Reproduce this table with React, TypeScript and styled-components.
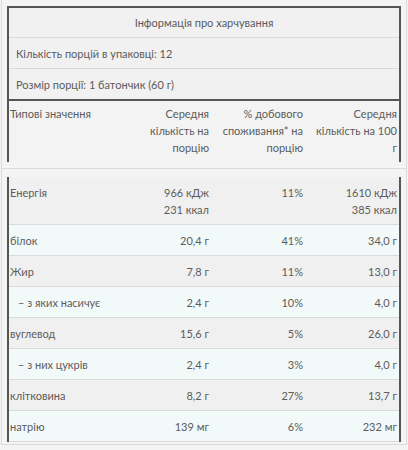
import styled, { createGlobalStyle } from 'styled-components';

const GlobalStyle = createGlobalStyle`
  body {
    margin: 0;
    background: #f4f4f4;
    font-family: Lato, "Open Sans", sans-serif;
    color: #5c5c5c;
  }
`;

interface NutrientRow {
  name: string;
  perServing: string[];
  daily: string;
  per100: string[];
  sub?: boolean;
}

const ROWS: NutrientRow[] = [
  { name: 'Енергія', perServing: ['966 кДж', '231 ккал'], daily: '11%', per100: ['1610 кДж', '385 ккал'] },
  { name: 'білок', perServing: ['20,4 г'], daily: '41%', per100: ['34,0 г'] },
  { name: 'Жир', perServing: ['7,8 г'], daily: '11%', per100: ['13,0 г'] },
  { name: '– з яких насичує', perServing: ['2,4 г'], daily: '10%', per100: ['4,0 г'], sub: true },
  { name: 'вуглевод', perServing: ['15,6 г'], daily: '5%', per100: ['26,0 г'] },
  { name: '– з них цукрів', perServing: ['2,4 г'], daily: '3%', per100: ['4,0 г'], sub: true },
  { name: 'клітковина', perServing: ['8,2 г'], daily: '27%', per100: ['13,7 г'] },
  { name: 'натрію', perServing: ['139 мг'], daily: '6%', per100: ['232 мг'] },
];

export default function App() {
  return (
    <>
      <GlobalStyle />
      <Panel $top>
        <Table>
          <TitleRow>Інформація про харчування</TitleRow>
          <InfoRow>Кількість порцій в упаковці: 12</InfoRow>
          <InfoRow $last>Розмір порції: 1 батончик (60 г)</InfoRow>
          <HeadRow>
            <Cell>Типові значення</Cell>
            <NumCell>Середня кількість на порцію</NumCell>
            <NumCell>% добового споживання* на порцію</NumCell>
            <NumCell>Середня кількість на 100 г</NumCell>
          </HeadRow>
        </Table>
      </Panel>
      <Panel>
        <BodyTable>
          {ROWS.map((row, idx) => (
            <BodyRow key={row.name} $mint={idx % 2 === 1}>
              <Cell $sub={row.sub}>{row.name}</Cell>
              <NumCell>
                {row.perServing.map((v) => (
                  <div key={v}>{v}</div>
                ))}
              </NumCell>
              <NumCell>{row.daily}</NumCell>
              <NumCell>
                {row.per100.map((v) => (
                  <div key={v}>{v}</div>
                ))}
              </NumCell>
            </BodyRow>
          ))}
        </BodyTable>
      </Panel>
    </>
  );
}

const Panel = styled.div<{ $top?: boolean }>`
  margin: -1px 1px 0;
  border: 1px solid #dcdcdc;
  border-top-color: ${({ $top }) => ($top ? 'transparent' : '#dcdcdc')};
  padding: ${({ $top }) => ($top ? '6px 5px 6px' : '8px 5px 2px')};
  background: #f4f4f4;
`;

const Table = styled.div`
  border: 2px solid #555;
  border-bottom: none;
  font-size: 11px;
  line-height: 17px;
`;

const BodyTable = styled.div`
  border-left: 2px solid #555;
  border-right: 2px solid #555;
  font-size: 11px;
  line-height: 17px;
`;

const TitleRow = styled.div`
  padding: 6px 6px 6px;
  text-align: center;
  background: #f1f1f1;
  border-bottom: 1px solid #dadada;
`;

const InfoRow = styled.div<{ $last?: boolean }>`
  padding: 7px 7px 6px;
  background: #f1f1f1;
  border-bottom: ${({ $last }) => ($last ? '2px solid #555' : '1px solid #dadada')};
`;

const HeadRow = styled.div`
  display: grid;
  grid-template-columns: 1fr 94px 94px 94px;
  padding: 4px 0 6px;
  background: #f3f3f3;
`;

const BodyRow = styled.div<{ $mint: boolean }>`
  display: grid;
  grid-template-columns: 1fr 94px 94px 94px;
  padding: 7px 0 6px;
  background: ${({ $mint }) => ($mint ? '#f2f9f9' : '#f0f0f0')};
  border-bottom: 1px solid #dadada;
`;

const Cell = styled.div<{ $sub?: boolean }>`
  padding-left: ${({ $sub }) => ($sub ? '9px' : '1px')};
`;

const NumCell = styled.div`
  padding: 0 2px 0 5px;
  text-align: right;
`;
